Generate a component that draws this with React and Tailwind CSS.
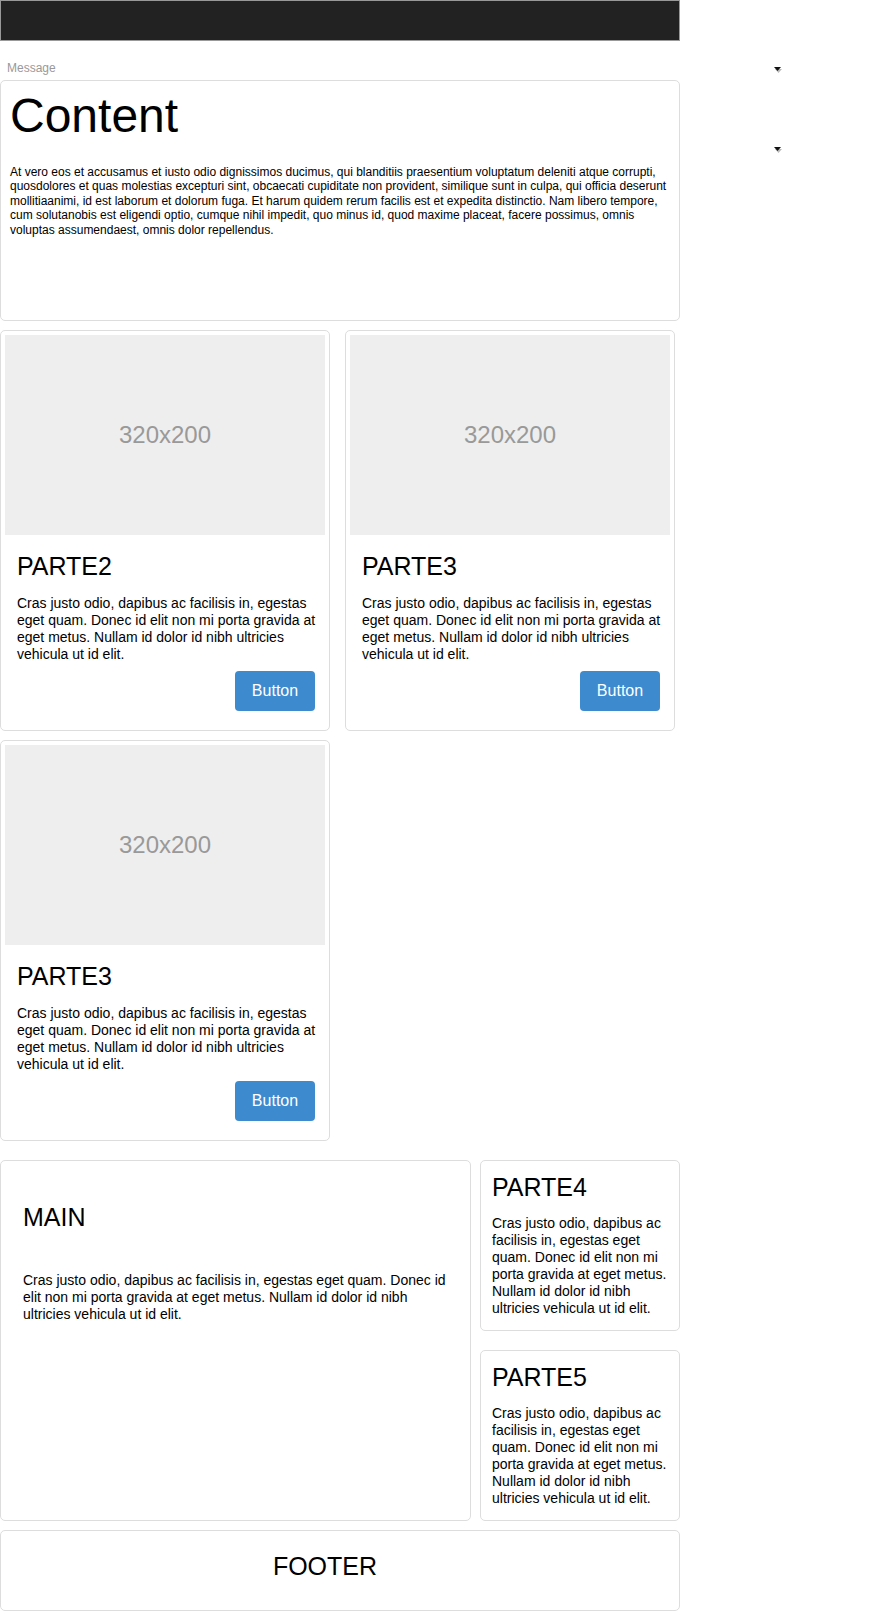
import React from "react";

const lorem =
  "Cras justo odio, dapibus ac facilisis in, egestas eget quam. Donec id elit non mi porta gravida at eget metus. Nullam id dolor id nibh ultricies vehicula ut id elit.";

const Arrow = ({ className }) => (
  <svg className={className} width="10" height="8" viewBox="0 0 10 8">
    <polygon points="2,3 9,3 5.5,7" fill="#bbb" />
    <polygon points="1,1 8,1 4.5,5" fill="#111" />
  </svg>
);

const ImageCard = ({ title }) => (
  <div className="w-[330px] h-[401px] border border-[#ddd] rounded-[5px] p-[4px] flex flex-col">
    <div className="w-[320px] h-[200px] bg-[#eee] flex items-center justify-center text-[24px] text-[#999]">
      320x200
    </div>
    <div className="flex flex-col pt-[16px] pl-[12px] pr-[10px]">
      <h3 className="text-[25px] leading-[30px]">{title}</h3>
      <p className="mt-[14px] text-[14px] leading-[17px] w-[306px]">{lorem}</p>
      <button className="self-end mt-[8px] w-[80px] h-[40px] rounded-[4px] bg-[#3d8ace] text-white text-[16px]">
        Button
      </button>
    </div>
  </div>
);

const SideCard = ({ title }) => (
  <div className="h-[171px] border border-[#ddd] rounded-[5px] pt-[11px] pl-[11px] pr-[8px]">
    <h3 className="text-[25px] leading-[30px]">{title}</h3>
    <p className="mt-[13px] text-[14px] leading-[17px]">{lorem}</p>
  </div>
);

export default function App() {
  return (
    <div
      className="relative w-[890px] min-h-[1611px] bg-white text-black"
      style={{ fontFamily: '"Liberation Sans", Arial, sans-serif' }}
    >
      <Arrow className="absolute left-[773px] top-[66px]" />
      <Arrow className="absolute left-[773px] top-[146px]" />

      <div className="w-[680px]">
        <div className="h-[41px] bg-[#222] border border-[#999]" />

        <div className="h-[39px] pt-[20px] pl-[7px] text-[12px] leading-[14px] text-[#999]">
          Message
        </div>

        <div className="h-[241px] border border-[#ddd] rounded-[5px] pt-[7px] pl-[9px]">
          <h1 className="text-[48px] leading-[55px]">Content</h1>
          <p className="mt-[22px] text-[12px] leading-[14.4px] w-[668px]">
            At vero eos et accusamus et iusto odio dignissimos ducimus, qui blanditiis praesentium voluptatum deleniti atque corrupti, quosdolores et quas molestias excepturi sint, obcaecati cupiditate non provident, similique sunt in culpa, qui officia deserunt mollitiaanimi, id est laborum et dolorum fuga. Et harum quidem rerum facilis est et expedita distinctio. Nam libero tempore, cum solutanobis est eligendi optio, cumque nihil impedit, quo minus id, quod maxime placeat, facere possimus, omnis voluptas assumendaest, omnis dolor repellendus.
          </p>
        </div>

        <div className="mt-[9px] flex flex-wrap gap-x-[15px] gap-y-[9px]">
          <ImageCard title="PARTE2" />
          <ImageCard title="PARTE3" />
          <ImageCard title="PARTE3" />
        </div>

        <div className="mt-[19px] flex gap-[9px]">
          <div className="w-[471px] h-[361px] border border-[#ddd] rounded-[5px] pt-[41px] px-[22px]">
            <h2 className="text-[25px] leading-[30px]">MAIN</h2>
            <p className="mt-[40px] text-[14px] leading-[17px]">{lorem}</p>
          </div>
          <div className="w-[200px] flex flex-col gap-[19px]">
            <SideCard title="PARTE4" />
            <SideCard title="PARTE5" />
          </div>
        </div>

        <div className="mt-[9px] h-[81px] border border-[#ddd] rounded-[5px] pt-[20px] pr-[30px] text-center text-[25px] leading-[30px]">
          FOOTER
        </div>
      </div>
    </div>
  );
}
